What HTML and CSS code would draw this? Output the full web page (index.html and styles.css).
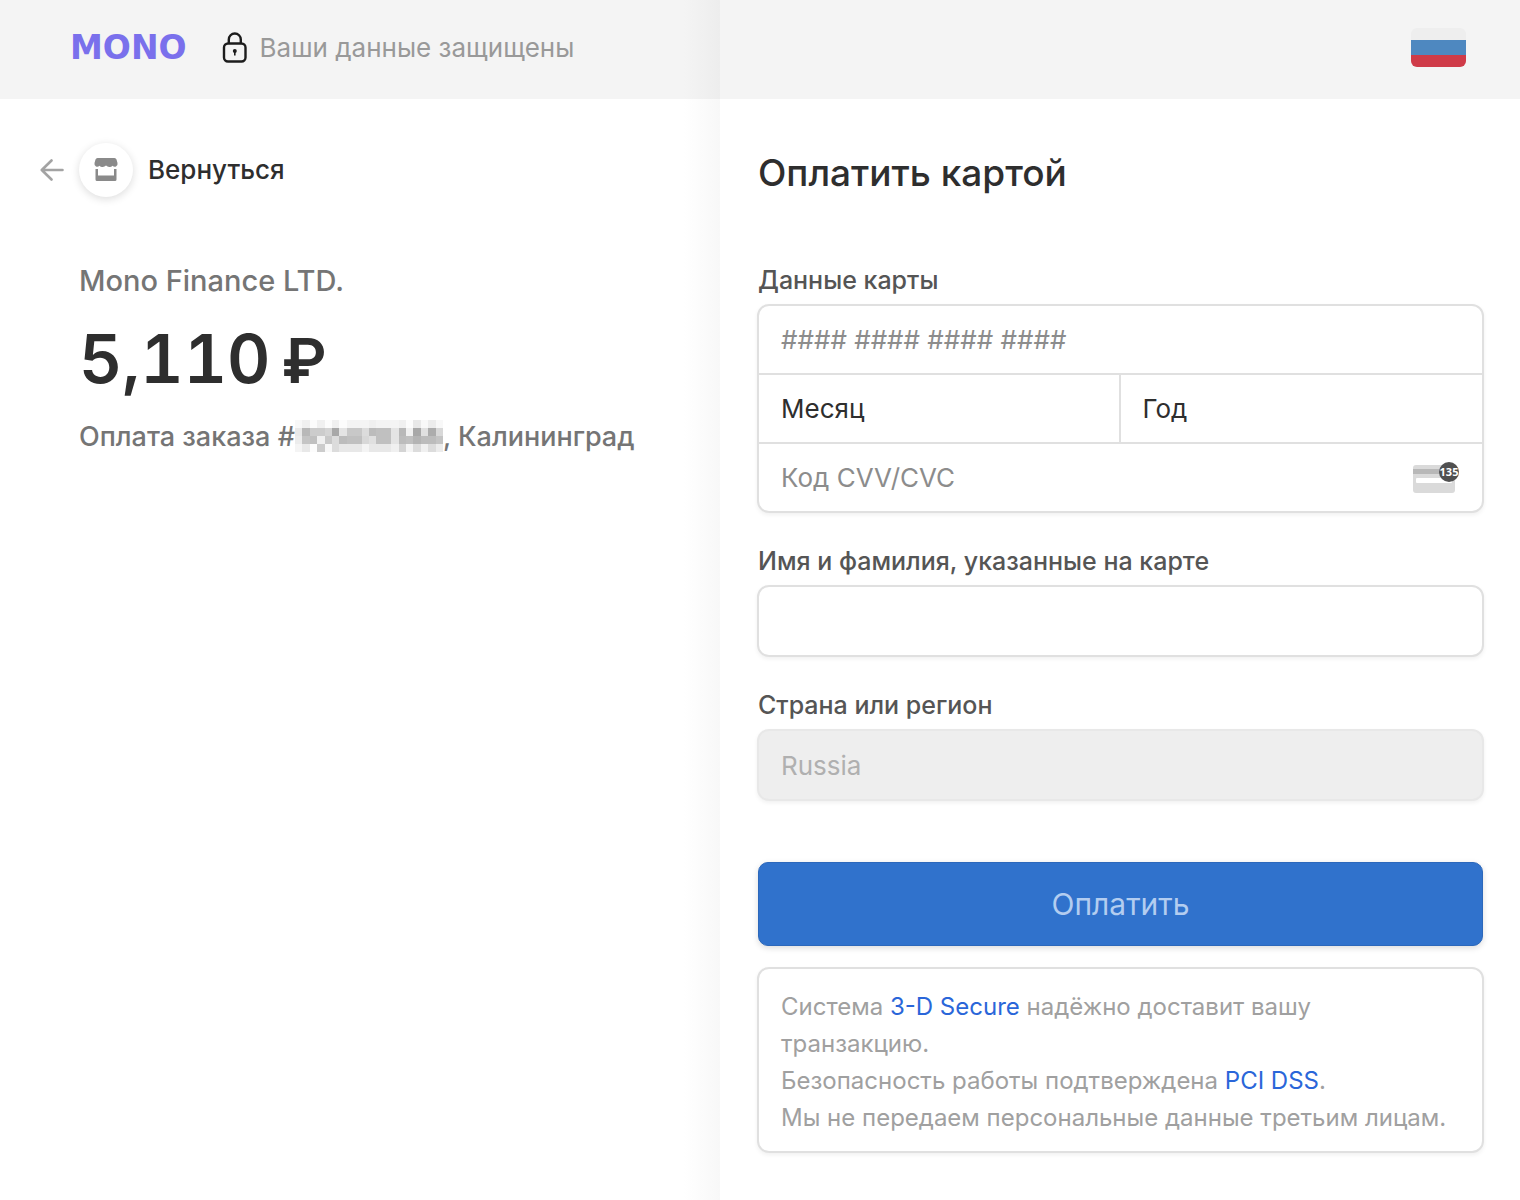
FILE: index.html
```html
<!DOCTYPE html>
<html lang="ru">
<head>
<meta charset="utf-8">
<meta name="viewport" content="width=device-width, initial-scale=1">
<title>Оплатить картой</title>
<link rel="stylesheet" href="styles.css">
<script src="mask.js" defer></script>
</head>
<body>
<div class="page">
  <section class="summary">
    <header class="bar">
      <a class="logo" href="#">MONO</a>
      <p class="secure">
        <svg class="lock" width="26" height="32" viewBox="0 0 26 32" fill="none" stroke="#1c1c1c" stroke-width="2.400" aria-hidden="true">
          <rect x="2" y="11.500" width="21.500" height="18" rx="4"/>
          <path d="M6.800 11.500V7.500a6 6 0 0 1 12 0v4"/>
          <circle cx="12.800" cy="19" r="2" fill="#1c1c1c" stroke="none"/>
          <path d="M12.800 19v4.500" stroke-width="1.600"/>
        </svg>
        Ваши данные защищены
      </p>
    </header>
    <div class="order">
      <a class="back" href="#">
        <svg width="24" height="24" viewBox="0 0 24 24" fill="none" stroke="#a3a3a3" stroke-width="2.600" stroke-linecap="round" stroke-linejoin="round" aria-hidden="true">
          <path d="M22.500 12H2M11.500 2.500L1.800 12l9.700 9.500"/>
        </svg>
        <span class="shop">
          <svg width="24" height="24" viewBox="0 0 24 24" fill="#8a8a8a" aria-hidden="true">
            <path d="M3.500 0h17q1.500 0 2 1.500l1 3.500q.5 2.500-1.500 3.500-2 .8-3.500-.8-1.500 1.600-3.300 1.200-1.700 0-3.200-1.400-1.500 1.400-3.200 1.400-1.800.4-3.300-1.200-1.500 1.600-3.500.8-2-1-1.500-3.500l1-3.500Q2 0 3.500 0z"/>
            <path d="M1.500 11H4v6.500h16V11h2.500v10.500q0 1.500-1.500 1.500H3q-1.500 0-1.500-1.500z"/>
          </svg>
        </span>
        Вернуться
      </a>
      <div class="details">
        <p class="merchant">Mono Finance LTD.</p>
        <p class="amount">5,110&thinsp;<span class="currency">₽</span></p>
        <p class="purpose">Оплата заказа #<svg class="mask" width="148" height="32" viewBox="0 0 20 4" preserveAspectRatio="none" shape-rendering="crispEdges" role="img" aria-label="номер скрыт"></svg>, Калининград</p>
      </div>
    </div>
  </section>

  <main class="payment">
    <header class="bar bar-end">
      <button class="language" type="button" aria-label="Язык: русский">
        <svg width="56" height="40" viewBox="0 0 56 40" aria-hidden="true">
          <clipPath id="flag"><rect x="1" y="0" width="55" height="39" rx="6"/></clipPath>
          <g clip-path="url(#flag)">
            <path fill="#eeeeee" d="M0 0h56v12H0z"/>
            <path fill="#4e88c0" d="M0 12h56v15H0z"/>
            <path fill="#cf3b48" d="M0 27h56v13H0z"/>
          </g>
        </svg>
      </button>
    </header>
    <form class="form">
      <h1>Оплатить картой</h1>

      <fieldset class="field">
        <legend>Данные карты</legend>
        <div class="card box">
          <input class="control" type="text" inputmode="numeric" placeholder="#### #### #### ####" aria-label="Номер карты">
          <div class="expiry">
            <select class="control" aria-label="Месяц"><option>Месяц</option></select>
            <select class="control" aria-label="Год"><option>Год</option></select>
          </div>
          <div class="code">
            <input class="control" type="text" inputmode="numeric" placeholder="Код CVV/CVC" aria-label="Код CVV/CVC">
            <svg width="48" height="32" viewBox="0 0 48 32" aria-hidden="true">
              <rect x="1" y="3" width="42" height="28" rx="3" fill="#dadada"/>
              <path fill="#b8b8b8" d="M1 7h42v5H1z"/>
              <rect x="4" y="16" width="36" height="5" rx="1" fill="#fff"/>
              <circle cx="37" cy="10" r="10" fill="#505050"/>
              <text class="digits" x="37" y="14" text-anchor="middle">135</text>
            </svg>
          </div>
        </div>
      </fieldset>

      <div class="field">
        <label for="holder">Имя и фамилия, указанные на карте</label>
        <input class="control box" id="holder" type="text">
      </div>

      <div class="field">
        <label for="country">Страна или регион</label>
        <input class="control box" id="country" type="text" value="Russia" disabled>
      </div>

      <button class="pay" type="submit">Оплатить</button>

      <p class="notice box">Система <a href="#">3-D Secure</a> надёжно доставит вашу транзакцию.<br>Безопасность работы подтверждена <a href="#">PCI DSS</a>.<br>Мы не передаем персональные данные третьим лицам.</p>
    </form>
  </main>
</div>
</body>
</html>
```
FILE: mask.js
```js
// Grey levels of the mosaic that hides the order number, one pair of hex digits per cell.
const rows = [
  "f8 f0 fc f0 fc f0 fc f4 f4 f4 f0 f4 f4 f4 f0 fc e8 f8 ec f8",
  "e8 b8 cc cc d4 a8 e4 c8 c8 dc bc c0 c0 e4 b8 f0 a8 e0 ac d8",
  "ec c4 c0 f0 c8 dc bc c0 c0 d8 e0 c0 c0 e4 bc c0 b4 bc bc c4",
  "f4 e8 fc cc f8 dc e8 e8 e8 f4 e8 e8 e8 f0 d4 f4 dc f0 dc ec"
];

const mask = document.querySelector(".mask");
rows.forEach((row, y) => {
  row.split(" ").forEach((level, x) => {
    const cell = document.createElementNS("http://www.w3.org/2000/svg", "rect");
    cell.setAttribute("x", x);
    cell.setAttribute("y", y);
    cell.setAttribute("width", 1);
    cell.setAttribute("height", 1);
    cell.setAttribute("fill", "#" + level.repeat(3));
    mask.append(cell);
  });
});
```
FILE: styles.css
```css
* {
  box-sizing: border-box;
}

body {
  margin: 0;
  background: #fff;
  color: #2e2e2e;
  font-family: Inter, "Liberation Sans", sans-serif;
}

p,
h1 {
  margin: 0;
}

a {
  color: #2a66d9;
  text-decoration: none;
}

.page {
  display: grid;
  grid-template-columns: 9fr 10fr;
  min-height: 100vh;
}

.summary {
  background: linear-gradient(to left, #f8f8f8, #fff 36px);
}

.bar {
  display: flex;
  align-items: center;
  gap: 35px;
  height: 99px;
  padding: 0 54px 4px 70px;
  background: rgba(0, 0, 0, 0.044);
}

.bar-end {
  justify-content: flex-end;
}

.logo {
  color: #7a70ec;
  font: bold 33px/40px "DejaVu Sans", sans-serif;
}

.secure {
  display: flex;
  align-items: center;
  gap: 12px;
  color: #999;
  font-size: 26px;
  line-height: 32px;
}

.language {
  padding: 0;
  border: 0;
  background: none;
}

.language svg {
  display: block;
}

.order {
  padding: 44px 40px;
}

.back {
  display: flex;
  align-items: center;
  gap: 15px;
  color: #2e2e2e;
  font-size: 26px;
  font-weight: 500;
  line-height: 32px;
}

.shop {
  display: grid;
  place-items: center;
  width: 54px;
  height: 54px;
  border-radius: 50%;
  background: #fff;
  box-shadow: 0 2px 8px rgba(0, 0, 0, 0.14);
}

.details {
  padding: 64px 0 0 39px;
  color: #757575;
}

.merchant {
  font-size: 29px;
  font-weight: 500;
  line-height: 40px;
}

.amount {
  padding: 16px 0;
  color: #2e2e2e;
  font-size: 67px;
  font-variant-numeric: tabular-nums;
  font-weight: 600;
  line-height: 84px;
}

.currency {
  font-size: 62px;
}

.purpose {
  font-size: 27px;
  font-weight: 500;
  line-height: 36px;
}

.mask {
  vertical-align: -6px;
}

.form {
  padding: 50px 36px 46px 37px;
}

h1 {
  margin-bottom: 67px;
  padding: 0 1px;
  font-size: 37px;
  font-weight: 500;
  line-height: 48px;
}

.field {
  min-width: 0;
  margin: 0 0 32px;
  padding: 0;
  border: 0;
}

legend,
label {
  display: block;
  padding: 0 1px;
  margin-bottom: 8px;
  color: #555;
  font-size: 25px;
  font-weight: 500;
  line-height: 32px;
}

.box {
  border: 2px solid #e0e0e0;
  border-radius: 12px;
  background: #fff;
  box-shadow: 0 2px 4px rgba(0, 0, 0, 0.06);
}

.control {
  display: block;
  width: 100%;
  height: 67px;
  padding: 0 22px;
  color: #2e2e2e;
  font: 26px/32px Inter, "Liberation Sans", sans-serif;
}

.control.box {
  height: 72px;
}

.control:disabled {
  background: #eee;
  border-color: #e8e8e8;
  color: #b0b0b0;
}

.control::placeholder {
  color: #8c8c8c;
  opacity: 1;
}

.card .control {
  border: 0;
  background: none;
  appearance: none;
}

.expiry {
  display: grid;
  grid-template-columns: 1fr 1fr;
  border: solid #e0e0e0;
  border-width: 2px 0;
}

.card .expiry .control:first-child {
  border-right: 2px solid #e0e0e0;
  border-radius: 0;
}

.code {
  display: flex;
  align-items: center;
  padding-right: 22px;
}

.code svg {
  flex: none;
}

.digits {
  fill: #fff;
  font: bold 11px "Open Sans", sans-serif;
}

.pay {
  display: block;
  width: calc(100% - 2px);
  height: 84px;
  margin: 61px 1px 21px;
  border: 1px solid #2c68bb;
  border-radius: 10px;
  background: #3072cc;
  box-shadow: 0 2px 6px rgba(0, 0, 0, 0.14);
  color: #b3cdf0;
  font: 30px/40px Inter, "Liberation Sans", sans-serif;
}

.notice {
  padding: 19px 22px 15px;
  color: #a0a0a0;
  font-size: 24px;
  line-height: 37px;
}
```
